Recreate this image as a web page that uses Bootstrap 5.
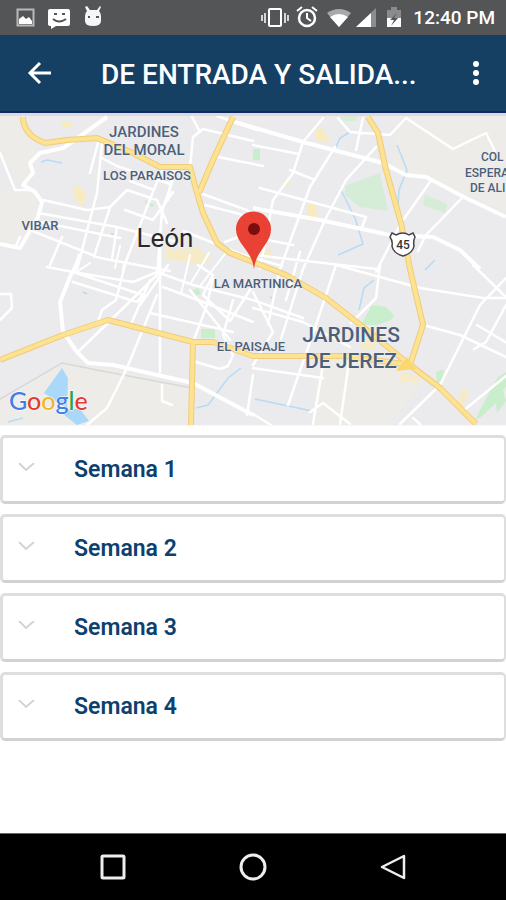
<!DOCTYPE html>
<html lang="es">
<head>
<meta charset="utf-8">
<meta name="viewport" content="width=device-width, initial-scale=1">
<title>De entrada y salida</title>
<link rel="stylesheet" href="https://cdn.jsdelivr.net/npm/bootstrap@5.3.0/dist/css/bootstrap.min.css">
<style>
  body { font-family: Roboto, sans-serif; background: #fff; }
  .status { background: #545556; height: 35px; color: #fff; font-size: 19px; line-height: 36px; font-weight: 500; padding: 0 11px 0 16px; }
  .appbar { background: #163f64; height: 78px; border-bottom: 2px solid #0c2a63; padding: 0 10px 0 20px; }
  .appbar h1 { color: #fff; font-size: 28px; line-height: 36px; font-weight: 500; margin: 4px 0 0 41px; }
  .tap { background: none; border: 0; padding: 0; width: 40px; height: 40px; line-height: 0; }
  .map-view { display: block; width: 100%; height: auto; border-bottom: 1px solid #f7f7f5; }
  .weeks { padding: 9px 0 24px; gap: 10px; }
  .week { width: 100%; height: 69px; background: #fff; border: solid #dedede; border-width: 3px 2px 3px 3px; border-bottom-color: #d2d2d2; border-radius: 5px; padding: 0 13px 0 14px; color: #0c416f; font-size: 23px; line-height: 32px; font-weight: 600; gap: 38px; text-align: left; }
  .softkeys { background: #000; height: 67px; border-top: 1px solid #666; padding: 0 93px; }
</style>
</head>
<body class="d-flex flex-column min-vh-100">

<div class="status d-flex align-items-center">
  <svg width="88" height="26" viewBox="0 0 88 26" aria-hidden="true">
    <rect x="1.500" y="4.500" width="16" height="16" fill="none" stroke="#b9b9b9" stroke-width="2"/>
    <path d="M3 19v-5l4-3 3 3 3-2 3 4v3z" fill="#fff"/>
    <path d="M34 4h18q2 0 2 2v13q0 2-2 2H40l-5 3v-3q-3 0-3-2V6q0-2 2-2z" fill="#fff"/>
    <path d="M38 9h3M46 9h3M37 14q6 5 13 0" fill="none" stroke="#545556" stroke-width="2"/>
    <path d="M71 1l3 4h7l3-4 1 1-2 4q2 2 2 5v5q0 5-8 5t-8-5v-5q0-3 2-5l-2-4z" fill="#f6f6f6"/>
    <path d="M72 12h2M80 12h3" stroke="#545556" stroke-width="2"/>
  </svg>
  <svg class="ms-auto me-2" width="144" height="26" viewBox="0 0 144 26" aria-hidden="true">
    <g fill="none" stroke="#fff" stroke-width="2">
      <rect x="8" y="4" width="12" height="17" rx="1"/>
      <path d="M4 8v10M24 8v10M1 10v6M27 10v6" stroke="#d5d5d5"/>
      <circle cx="46" cy="13" r="8" stroke-width="2.500"/>
      <path d="M46 8v5l4 3M36 6l5-4M51 2l5 4"/>
    </g>
    <path d="M66 8q12-8 24 0L78 22z" fill="#a9a9a9"/><path d="M69 12q9-6 18 0L78 22z" fill="#fff"/>
    <path d="M95 22L115 3v19z" fill="#8d8d8d"/><path d="M95 22L110 8v14z" fill="#fff"/>
    <path d="M126 5h4V2h6v3h4v8h-14z" fill="#8b8b8b"/><path d="M126 13h14v9h-14z" fill="#fff"/>
    <path d="M136 8l-7 7h4l-3 6 7-8h-4z" fill="#545556"/>
  </svg>
  <span>12:40 PM</span>
</div>

<header class="appbar d-flex align-items-center">
  <button class="tap" type="button" aria-label="Atrás">
    <svg width="26" height="26" viewBox="0 0 26 26"><path d="M24 13H3M13 3L3 13l10 10" fill="none" stroke="#fff" stroke-width="3"/></svg>
  </button>
  <h1 class="flex-grow-1 text-nowrap">DE ENTRADA Y SALIDA...</h1>
  <button class="tap flex-shrink-0" type="button" aria-label="Más opciones">
    <svg width="8" height="26" viewBox="0 0 8 26" fill="#fff"><circle cx="4" cy="4" r="3"/><circle cx="4" cy="13" r="3"/><circle cx="4" cy="22" r="3"/></svg>
  </button>
</header>

<main class="flex-grow-1">
  <svg class="map-view" viewBox="0 113 506 312" role="img" aria-label="Mapa de León">
    <rect y="113" width="506" height="312" fill="#ebeaec"/>
    <path d="M0 113h25l2 20 12 16-9 12 2 10-10 15-22-30zM0 190l15 0 20 5 3 20-20 33-18-8zM0 400l60-37 50 5 80 20 0 37H0zM396 135l10-18 100 0v95l-45-20-70-25zM320 355l70 10 30 20-30 39h-80z" fill="#edece9"/>
    <g fill="#c9eecb">
      <path d="M345 186l35-13 8 38-28-4-15-12z" opacity=".65"/><path d="M425 195l22 9-2 9-22-8z" opacity=".65"/>
      <path d="M145 200l10 5-3 2-7-4zM253 149h7v11h-7zM193 290l5-2 3 6-6 2zM201 329h14v9h-14z"/>
      <path d="M361 325l11-20 14 2 8 8-3 5-14 5zM437 382l-1-10 8-3-2 13z"/>
      <path d="M506 372l-9 6-22 42 6-3 15-14 1 10 9-12-3-10 3-5z"/>
      <path d="M340 114h18l-2 7h-14z" opacity=".6"/>
    </g>
    <g fill="#f9ebc0">
      <path d="M73 190l3-5 10 7-3 15-8-8zM60 121l10 1 2 6-9-1zM314 132l7-5 9 14-12 1zM307 205l9-3 1 15-9 5zM284 180l6-2-1 8-5-2z"/>
      <path d="M165 248l20 2 12-3 15 12-10 6-36-6zM265 247l7 4-3 8-6-2zM362 340h15l-3 10h-13zM401 372l20 6-5 6-6-3-10 2zM457 402l6-13 7 3-8 16z" opacity=".8"/>
    </g>
    <g fill="#aad8f8"><path d="M62 368l-18 25 23 16 1-31zM66 409l14 0 9 12-12 4-14-11z"/></g>
    <g fill="none" stroke="#b5dcf7" stroke-width="1.500">
      <path d="M41 162l6-2 15 3M350 132l-10 6-4 9M397 145l10 25-8 20-1 15M340 188l15 30 8 26-25 11M435 260l-10 10M374 280l-10 8-5 22M255 399l57 12M196 408l12-3 20-27 13-10M8 422l15-4M111 234h3M83 292l4 2M270 297l4 2"/>
    </g>
    <path d="M0 399l62-36 40 8 90 17" fill="none" stroke="#d8d8d6" stroke-width="1.500"/>

    <g fill="none" stroke="#fff" stroke-width="2.500" stroke-linejoin="round" stroke-linecap="round">
      <path d="M0 153l15 37h17M102 143l-5 50-20 76M43 200l44 10 23-3 17-17 30 10 10 23M38 213l79 14 60 15M40 222l80 16M163 167l-16 40-24 62M102 158l15 8 53 18M98 143l-8 30M30 230l70 28 70 13M50 265l12-28M15 248l5-11M125 210l28 10 20-28M130 181l24 9M110 207l-16 50M178 165l-16 46-5 65M117 227l-5 32"/>
      <path d="M190 167l3-30 10-8 50 12M200 132l-8-15M217 116l40 14M213 156l50 10M200 193l60 22M205 205l54 14M184 231l56 23 42 12M225 242l16-6 8-12M173 170l-5 30"/>
      <path d="M376 147l-30 33-21 40-22 49-22 70M323 118l-20 24-10 31-20 27-13 69M363 118l-7 32M338 118l12 14 40 3 16-17 47 31 33-16 9 18M335 147l-25 40-30 82-12 55M430 182l-29 41-25 49M463 197l-37 38-8 16M260 188l106 29-4 10M253 145l46 9M290 170l25 10M253 237l40 8M254 255l122 14M300 252l-14 48"/>
      <path d="M336 265l44 12 40 11 63 10h23M473 265l33 32M506 278l-26 27-40 80-40 39M423 325l37 10 46 22M506 305l-20 37-12 7M477 325l30 18M380 265l-4 33-25 25M336 265l-20 60-28 80M253 308l50 14 47 25M253 292l20 40-20 33M253 368l70 10M350 355l-10 69M323 365l-10 59M323 403l27 21M310 412l13-9M253 414l18 11M506 376l-43 35M413 418l8 7"/>
      <path d="M47 267l26 5 60 10 24-10 36 13 60 15 50 18M73 282l64 20 8-10M76 273l70 23M157 275l-79 77M160 240v132M157 295l-30 73-20 40-20 17M150 313l83 19M213 278l-7 30-13 34M125 265l-9 35-14 10-4 12M163 287l40 15 50 20M233 300l-10 35 10 20-5 11-8 3-24-7M150 280l-18 42M253 375l-6 40M162 385v16l10 4M0 320l12-12-1-14H0M190 290l40 50M168 265l-28 40M198 265l15 10-10 20 27 26 23-36"/>
      <path d="M115 268l5-22M90 263l-15 10M190 255l-9 39M209 253l-18 30M225 254l-25 32" stroke-width="2"/>
    </g>
    <g fill="none" stroke="#fff" stroke-width="4" stroke-linejoin="round">
      <path d="M107 117l-35 25-9 6-23 5-10 10 3 10-10 12 12 7 7 10-4 15-18 31-20-4"/>
      <path d="M80 254q-3 11-10 23l-10 25 3 30 14 20 11 11 25 2 80 18 60 32"/>
      <path d="M235 122l68 20 80 21 23 12 20 2 40 21 40 19M253 208l67 12 70 15 43 2 27 13 20 19"/>
    </g>
    <g fill="none" stroke-linejoin="round">
      <g stroke="#efcc7c" stroke-width="6">
        <path d="M23 117q0 18 22 26l22-3 30-2 36 15 27 14h30l7 26 6 20 14 30 13 10 23 9 33 13 40 23 37 29 47 38 30 23 36 36"/>
        <path d="M233 117l-20 43-14 33M368 117l10 16 8 37 15 53 9 46 13 56-13 40M0 360l63-25 45-15 85 22h20l40 14h93l64 9M193 342l-2 83"/>
      </g>
      <g stroke="#fde391" stroke-width="4">
        <path d="M23 117q0 18 22 26l22-3 30-2 36 15 27 14h30l7 26 6 20 14 30 13 10 23 9 33 13 40 23 37 29 47 38 30 23 36 36"/>
        <path d="M233 117l-20 43-14 33M368 117l10 16 8 37 15 53 9 46 13 56-13 40M0 360l63-25 45-15 85 22h20l40 14h93l64 9M193 342l-2 83"/>
      </g>
    </g>
    <path d="M396 371l11-14 9 12z" fill="#fad76f"/>
    <rect y="113" width="506" height="3" fill="#dcd9e2"/>

    <g font-family="Roboto, sans-serif" font-weight="500" fill="#4c6079" text-anchor="middle" stroke="#f1f0f2" stroke-width="1" paint-order="stroke" stroke-linejoin="round">
      <g font-size="15"><text x="144" y="137">JARDINES</text><text x="144" y="155">DEL MORAL</text></g>
      <g font-size="13"><text x="147" y="180">LOS PARAISOS</text><text x="40" y="230">VIBAR</text><text x="258" y="288">LA MARTINICA</text><text x="251" y="351">EL PAISAJE</text></g>
      <g font-size="12" text-anchor="start"><text x="481" y="161">COL</text><text x="465" y="177">ESPERA</text><text x="470" y="192">DE ALI</text></g>
      <g font-size="21"><text x="351" y="342">JARDINES</text><text x="351" y="368">DE JEREZ</text></g>
      <text x="165" y="247" font-size="26" font-weight="400" fill="#292929">León</text>
    </g>

    <path d="M392 233l4 2q7-4 13 0l4-2 2 4q-2 4-1 9-1 7-11 10-10-3-11-10 1-5-2-9z" fill="#fff" stroke="#454545" stroke-width="1.500"/>
    <text x="403" y="249" text-anchor="middle" font-family="Roboto, sans-serif" font-size="12" font-weight="500" fill="#333">45</text>

    <path d="M254 269c-2-19-18-25-18-40a17 17 0 0 1 35 0c0 15-15 21-17 40z" fill="#e94235"/>
    <circle cx="254" cy="229" r="6" fill="#7b0e0c"/>

    <text x="9" y="410" font-family="Lato, sans-serif" font-size="25" font-weight="500" stroke="#fff" stroke-width="1" paint-order="stroke"><tspan fill="#3f7de8">G</tspan><tspan fill="#e03c31">o</tspan><tspan fill="#efb52b">o</tspan><tspan fill="#3f7de8">g</tspan><tspan fill="#2ba24c">l</tspan><tspan fill="#e03c31">e</tspan></text>
  </svg>

  <div class="weeks d-flex flex-column">
    <button class="week d-flex align-items-center" type="button"><svg width="19" height="14" viewBox="0 0 19 14" aria-hidden="true"><path d="M2 0l7 7 8-7" fill="none" stroke="#d3d3d3" stroke-width="2"/></svg><span>Semana 1</span></button>
    <button class="week d-flex align-items-center" type="button"><svg width="19" height="14" viewBox="0 0 19 14" aria-hidden="true"><path d="M2 0l7 7 8-7" fill="none" stroke="#d3d3d3" stroke-width="2"/></svg><span>Semana 2</span></button>
    <button class="week d-flex align-items-center" type="button"><svg width="19" height="14" viewBox="0 0 19 14" aria-hidden="true"><path d="M2 0l7 7 8-7" fill="none" stroke="#d3d3d3" stroke-width="2"/></svg><span>Semana 3</span></button>
    <button class="week d-flex align-items-center" type="button"><svg width="19" height="14" viewBox="0 0 19 14" aria-hidden="true"><path d="M2 0l7 7 8-7" fill="none" stroke="#d3d3d3" stroke-width="2"/></svg><span>Semana 4</span></button>
  </div>
</main>

<nav class="softkeys d-flex align-items-center justify-content-between" aria-label="Navegación del sistema">
  <button class="tap" type="button" aria-label="Recientes"><svg width="28" height="28" viewBox="0 0 28 28"><rect x="3" y="3" width="22" height="22" rx="1" fill="none" stroke="#eee" stroke-width="3"/></svg></button>
  <button class="tap" type="button" aria-label="Inicio"><svg width="28" height="28" viewBox="0 0 28 28"><circle cx="14" cy="14" r="12" fill="none" stroke="#eee" stroke-width="3"/></svg></button>
  <button class="tap" type="button" aria-label="Volver"><svg width="28" height="28" viewBox="0 0 28 28"><path d="M25 3v22L3 14z" fill="none" stroke="#eee" stroke-width="2.500" stroke-linejoin="round"/></svg></button>
</nav>

<script src="https://cdn.jsdelivr.net/npm/bootstrap@5.3.0/dist/js/bootstrap.bundle.min.js"></script>
</body>
</html>
